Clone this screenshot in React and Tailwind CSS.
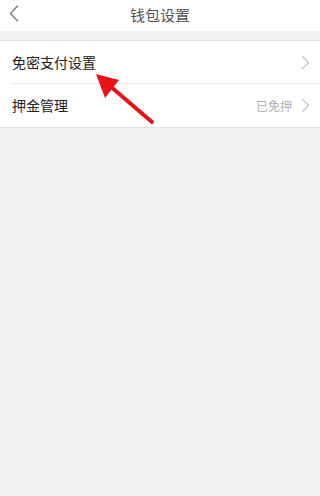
const Chevron = () => (
  <svg width="9" height="15" viewBox="0 0 9 15" fill="none" className="shrink-0">
    <path d="M1.5 1.5 L7.5 7.5 L1.5 13.5" stroke="#c4c4c4" strokeWidth="1.4" strokeLinecap="round" strokeLinejoin="round" />
  </svg>
)

function Row({ label, value, divider }) {
  return (
    <div className="relative flex h-[43px] items-center pl-3 pr-[10px]">
      <div className="flex-1 text-[14px] text-[#222]">{label}</div>
      {value && <div className="mr-[9px] text-[12px] text-[#b0b0b0]">{value}</div>}
      <Chevron />
      {divider && <div className="absolute bottom-0 left-3 right-0 h-px bg-[#e8e8e8]" />}
    </div>
  )
}

export default function App() {
  return (
    <div
      className="relative flex h-[496px] w-[320px] flex-col bg-[#f2f2f2]"
      style={{ fontFamily: '"Noto Sans CJK SC", "Noto Sans", sans-serif' }}
    >
      {/* Header */}
      <div className="relative flex h-[31px] items-center justify-center bg-white">
        <svg width="10" height="17" viewBox="0 0 10 17" fill="none" className="absolute left-[9px] top-[5px]">
          <path d="M8.5 1 L1.5 8.5 L8.5 16" stroke="#777" strokeWidth="1.3" strokeLinecap="round" strokeLinejoin="round" />
        </svg>
        <div className="text-[15px] text-[#555]">钱包设置</div>
      </div>

      {/* Settings list */}
      <div className="mt-[9px] border-y border-[#e4e4e4] bg-white">
        <Row label="免密支付设置" divider />
        <Row label="押金管理" value="已免押" />
      </div>

      {/* Red arrow annotation */}
      <svg width="320" height="140" viewBox="0 0 320 140" className="pointer-events-none absolute left-0 top-0">
        <line x1="152" y1="122" x2="110" y2="86" stroke="#e8141b" strokeWidth="4" strokeLinecap="round" />
        <polygon points="96,74 119,80 105,98" fill="#e8141b" />
      </svg>
    </div>
  )
}
